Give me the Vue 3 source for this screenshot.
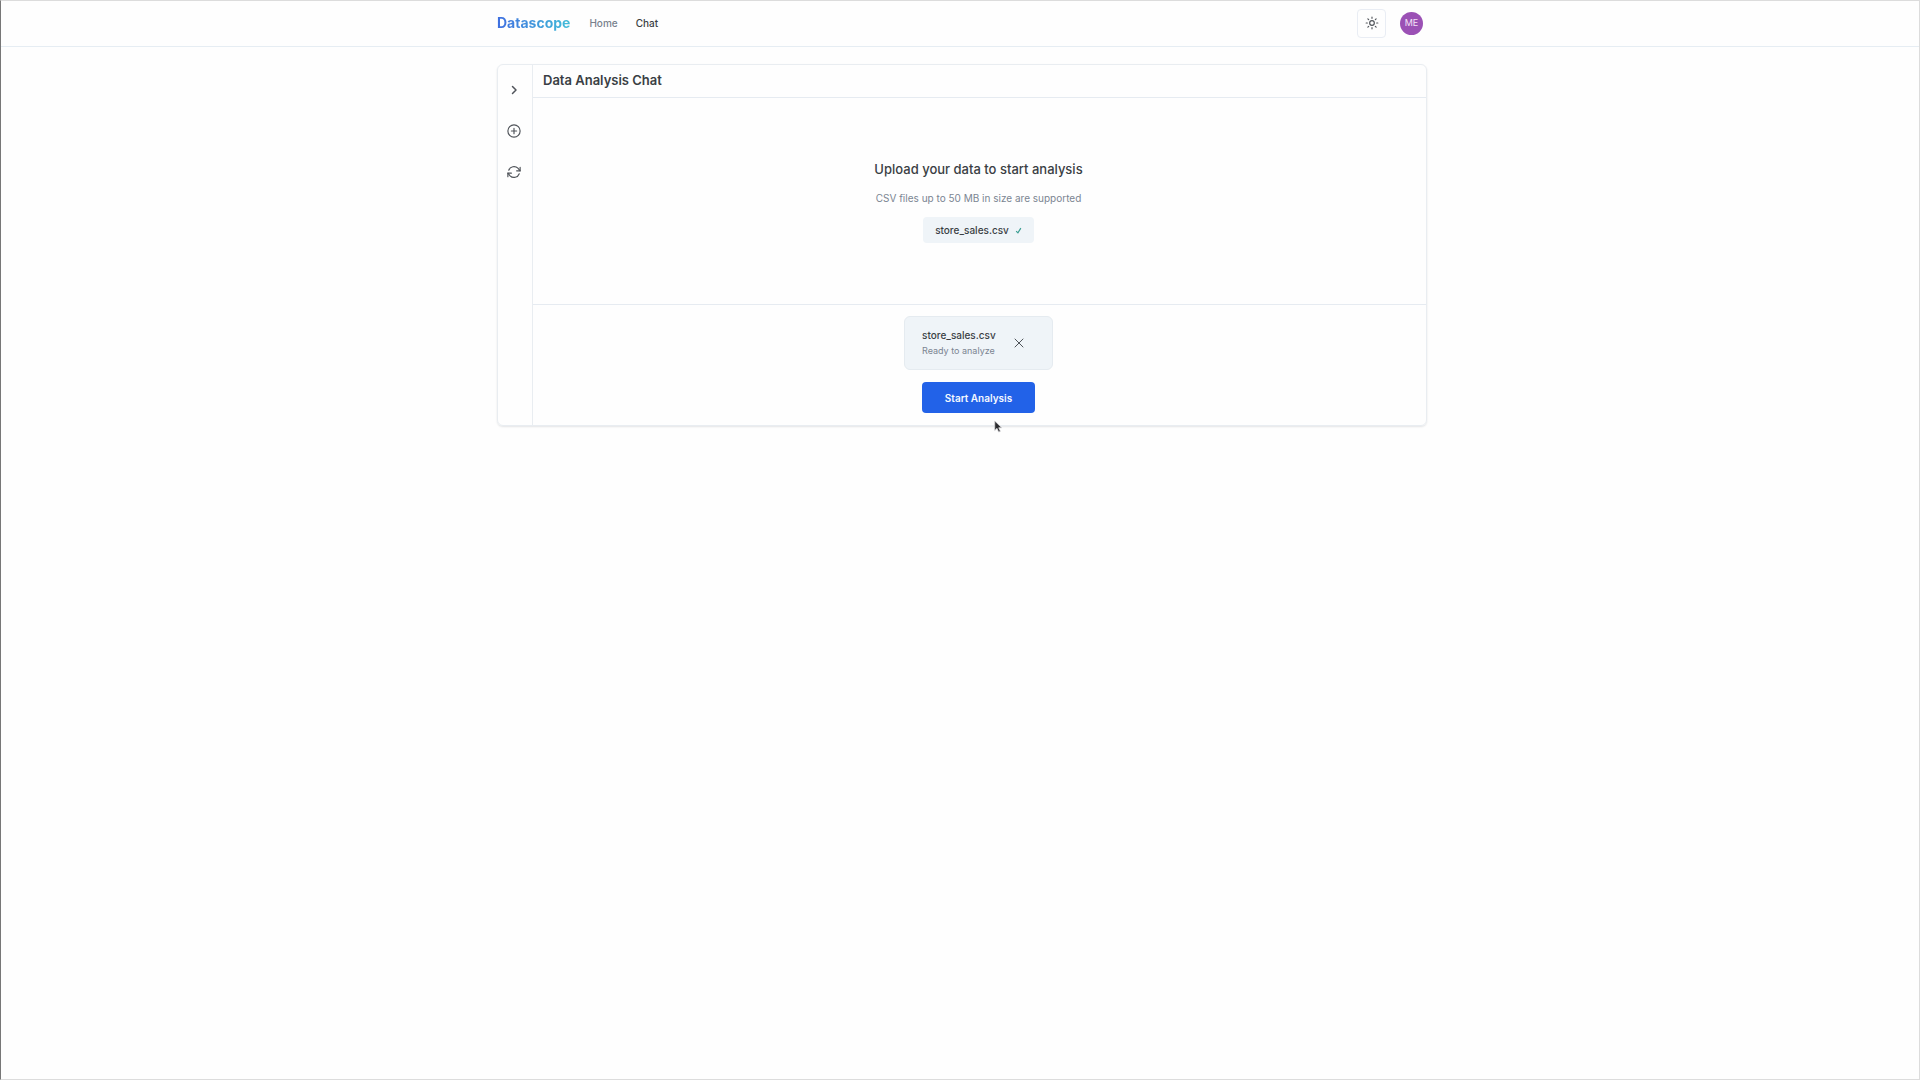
<script setup>
import { ref } from "vue";

const links = [
    { label: "Home", href: "#home", active: false },
    { label: "Chat", href: "#chat", active: true },
];

const file = ref({ name: "store_sales.csv", status: "Ready to analyze" });

const removeFile = () => {
    file.value = null;
};
</script>

<template>
    <div class="page">
        <header class="topbar">
            <div class="container topbar-inner">
                <a href="#" class="logo">Datascope</a>
                <nav class="nav">
                    <a
                        v-for="link in links"
                        :key="link.label"
                        :href="link.href"
                        class="nav-link"
                        :class="{ active: link.active }"
                    >{{ link.label }}</a>
                </nav>
                <div class="actions">
                    <button type="button" class="theme-btn" title="Toggle theme">
                        <svg viewBox="0 0 24 24" class="icon sun">
                            <circle cx="12" cy="12" r="4" />
                            <path d="M12 2v2M12 20v2M2 12h2M20 12h2M4.900 4.900l1.400 1.400M17.700 17.700l1.400 1.400M4.900 19.100l1.400-1.400M17.700 6.300l1.400-1.400" />
                        </svg>
                    </button>
                    <button type="button" class="avatar" title="Account">ME</button>
                </div>
            </div>
        </header>

        <main class="main">
            <div class="container card">
                <aside class="sidebar">
                    <button type="button" class="side-btn" title="Expand">
                        <svg viewBox="0 0 24 24" class="icon chevron"><path d="M9 5l7 7-7 7" /></svg>
                    </button>
                    <button type="button" class="side-btn large" title="New chat">
                        <svg viewBox="0 0 24 24" class="icon">
                            <circle cx="12" cy="12" r="10.5" />
                            <path d="M12 7.5v9M7.5 12h9" />
                        </svg>
                    </button>
                    <button type="button" class="side-btn large" title="Refresh">
                        <svg viewBox="0 0 24 24" class="icon">
                            <path d="M22.5 4v6h-6M1.5 20v-6h6" />
                            <path d="M3 9a9.5 9.5 0 0 1 15.700-3.500L22.5 10M1.500 14l3.800 4.500A9.5 9.5 0 0 0 21 15" />
                        </svg>
                    </button>
                </aside>

                <section class="chat">
                    <h1 class="chat-title">Data Analysis Chat</h1>

                    <div class="upload">
                        <h2>Upload your data to start analysis</h2>
                        <p>CSV files up to 50 MB in size are supported</p>
                        <button v-if="file" type="button" class="file-pill">
                            <span>{{ file.name }}</span>
                            <svg viewBox="0 0 12 12" class="check"><path d="M2 7l3 3 5-8" /></svg>
                        </button>
                    </div>

                    <div class="footer">
                        <div v-if="file" class="file-card">
                            <div class="file-info">
                                <strong>{{ file.name }}</strong>
                                <small>{{ file.status }}</small>
                            </div>
                            <button type="button" class="remove-btn" title="Remove file" @click="removeFile">
                                <svg viewBox="0 0 24 24" class="icon"><path d="M4 4l16 16M20 4L4 20" /></svg>
                            </button>
                        </div>
                        <div class="start">
                            <button type="button" class="start-btn" :disabled="!file">Start Analysis</button>
                            <svg viewBox="0 0 12 18" class="pointer">
                                <path d="M1 1v12.500l3-2.700 2.200 5 2.300-1-2.200-4.800h4z" />
                            </svg>
                        </div>
                    </div>
                </section>
            </div>
        </main>
    </div>
</template>

<style>
body {
    margin: 0;
    background: #fefefe;
}
</style>

<style scoped>
.page {
    box-sizing: border-box;
    min-height: 100vh;
    border: 1px solid #dcdcdc;
    border-left-color: #777;
    background: #fefefe;
    color: #3a3e44;
    font-family: Inter, "Liberation Sans", sans-serif;
    font-size: 10px;
    line-height: 16px;
}

button {
    display: flex;
    align-items: center;
    justify-content: center;
    padding: 0;
    border: 0;
    background: none;
    color: inherit;
    font: inherit;
    cursor: pointer;
}

.container {
    box-sizing: border-box;
    width: 100%;
    max-width: 930px;
    margin: 0 auto;
}

.topbar {
    padding: 0 0 1px 4px;
    border-bottom: 1px solid #e6edf3;
}

.topbar-inner {
    display: flex;
    align-items: center;
    height: 44px;
}

.logo {
    margin-right: 19px;
    background: linear-gradient(90deg, #3f6fe0, #42bcd8);
    background-clip: text;
    color: transparent;
    font-size: 14px;
    font-weight: 700;
    text-decoration: none;
}

.nav {
    display: flex;
    gap: 18px;
}

.nav-link {
    color: #79818d;
    font-weight: 500;
    text-decoration: none;
}

.nav-link.active {
    color: #3a3e44;
}

.actions {
    display: flex;
    align-items: center;
    gap: 14px;
    margin-left: auto;
    padding-right: 4px;
}

.icon {
    display: block;
    width: 12px;
    height: 12px;
    fill: none;
    stroke: #50545a;
    stroke-width: 2;
    stroke-linecap: round;
    stroke-linejoin: round;
}

.theme-btn {
    box-sizing: border-box;
    width: 29px;
    height: 29px;
    border: 1px solid #e9edf4;
    border-radius: 4px;
}

.sun {
    width: 14px;
    height: 14px;
}

.avatar {
    width: 23px;
    height: 23px;
    border-radius: 50%;
    background: #9b51b5;
    color: #f3e2f7;
    font-size: 9px;
}

.main {
    padding: 17px 0 17px 4px;
}

.card {
    display: flex;
    border: 1px solid #e9edf1;
    border-radius: 6px;
    box-shadow: 0 1px 2px rgba(30, 45, 60, 0.12);
}

.sidebar {
    display: flex;
    flex-direction: column;
    align-items: center;
    gap: 17px;
    box-sizing: border-box;
    width: 35px;
    padding: 13px 2px 0 0;
    border-right: 1px solid #e9edf1;
}

.side-btn {
    width: 24px;
    height: 24px;
}

.side-btn.large .icon {
    width: 14px;
    height: 14px;
}

.chevron {
    stroke-width: 3;
}

.chat {
    flex: 1;
    min-width: 0;
}

.chat-title {
    margin: 0;
    padding: 7px 10px 9px;
    border-bottom: 1px solid #e6ebf1;
    font-size: 13px;
    font-weight: 600;
}

.upload {
    display: flex;
    flex-direction: column;
    align-items: center;
    padding: 63px 18px 61px 16px;
}

.upload h2 {
    margin: 0;
    font-size: 13px;
    font-weight: 500;
}

.upload p {
    margin: 13px 0 11px;
    color: #7b8592;
}

.file-pill {
    gap: 6px;
    height: 26px;
    padding: 0 12px;
    border-radius: 4px;
    background: #eff4f8;
    font-weight: 500;
}

.check {
    width: 7px;
    height: 7px;
    fill: none;
    stroke: #3a9d92;
    stroke-width: 2;
}

.footer {
    display: flex;
    flex-direction: column;
    align-items: center;
    gap: 12px;
    padding: 11px 18px 12px 16px;
    border-top: 1px solid #e6ebf1;
}

.file-card {
    display: flex;
    align-items: center;
    gap: 17px;
    box-sizing: border-box;
    width: 149px;
    height: 54px;
    padding: 0 17px;
    border: 1px solid #e5ebf0;
    border-radius: 6px;
    background: #eff4f8;
}

.file-info {
    display: flex;
    flex-direction: column;
}

.file-info strong {
    font-weight: 500;
}

.file-info small {
    color: #7b8592;
    font-size: 9px;
}

.start {
    position: relative;
}

.start-btn {
    width: 113px;
    height: 31px;
    border-radius: 4px;
    background: #2262e8;
    color: #f4f8ff;
    font-weight: 600;
}

/* mouse cursor resting just under the button */
.pointer {
    position: absolute;
    left: 72px;
    top: 38px;
    width: 9px;
    height: 14px;
    fill: #2b2b2e;
    stroke: #d9d9dc;
    stroke-width: 1;
}
</style>
